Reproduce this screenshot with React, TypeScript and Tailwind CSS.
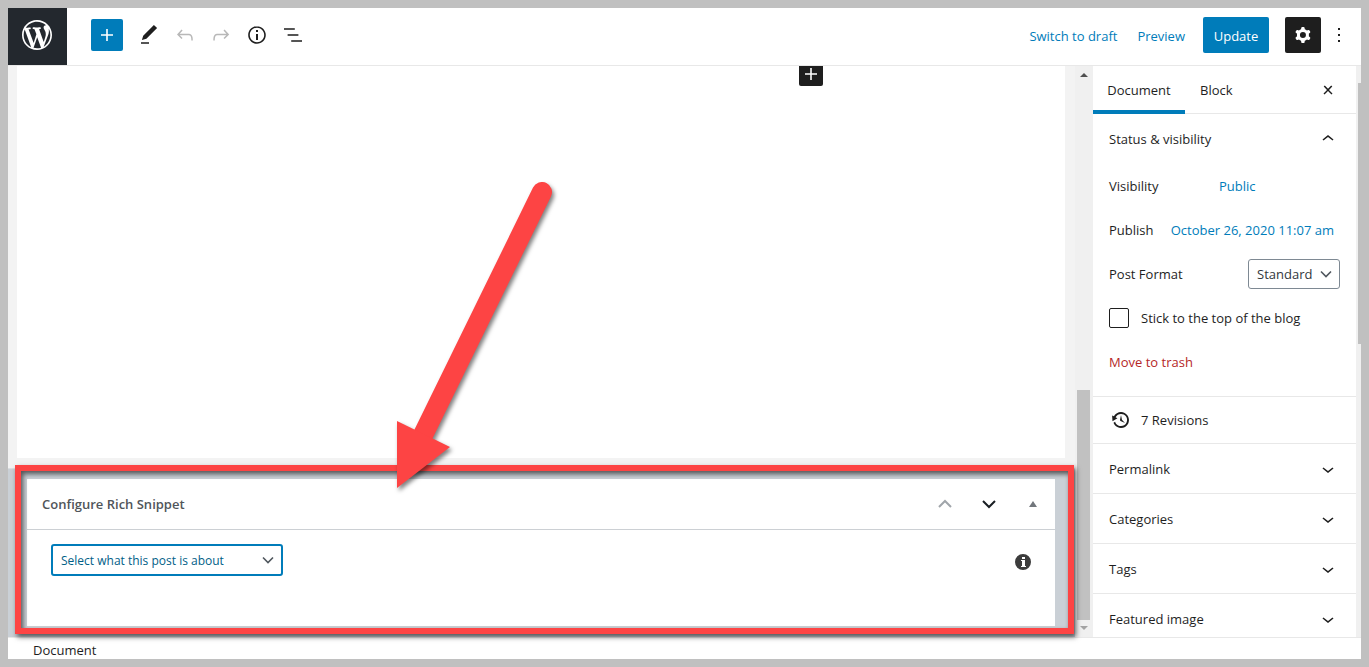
import type { ReactNode } from "react";
import clsx from "clsx";

const icons = {
  plus: "M18 11.2h-5.2V6h-1.6v5.2H6v1.6h5.2V18h1.6v-5.2H18z",
  edit: "M20.1 5.1L16.9 2 6.2 12.7l-1.3 4.4 4.5-1.3L20.1 5.1zM4 20.8h8v-1.5H4v1.5z",
  undo: "M18.3 11.7c-.6-.6-1.4-.9-2.3-.9H6.7l2.9-3.3-1.1-1-4.5 5L8.5 16l1-1-2.7-2.7H16c.5 0 .9.2 1.3.5 1 1 1 3.4 1 4.5v.3h1.5v-.2c0-1.5 0-4.3-1.5-5.7z",
  redo: "M15.6 6.5l-1.1 1 2.9 3.3H8c-.9 0-1.7.3-2.3.9-1.4 1.5-1.4 4.2-1.4 5.6v.2h1.5v-.3c0-1.1 0-3.5 1-4.5.3-.3.7-.5 1.3-.5h9.2L14.5 15l1.1 1.1 4.6-4.6-4.6-5z",
  info: "M12 3.2c-4.8 0-8.8 3.9-8.8 8.8 0 4.8 3.9 8.8 8.8 8.8 4.8 0 8.8-3.9 8.8-8.8 0-4.8-4-8.8-8.8-8.8zm0 16c-4 0-7.2-3.3-7.2-7.2C4.8 8 8 4.8 12 4.8s7.2 3.3 7.2 7.2c0 4-3.2 7.2-7.2 7.2zM11 17h2v-6h-2v6zm0-8h2V7h-2v2z",
  outline: "M13.8 5.2H3v1.5h10.8V5.2zm-3.6 12v1.5H21v-1.5H10.2zm7.2-6H6.6v1.5h10.8v-1.5z",
  cog: "M10.289 4.836A1 1 0 0111.275 4h1.306a1 1 0 01.987.836l.244 1.466c.787.26 1.503.679 2.108 1.218l1.393-.522a1 1 0 011.216.437l.653 1.13a1 1 0 01-.23 1.273l-1.148.944a6.025 6.025 0 010 2.435l1.149.946a1 1 0 01.23 1.272l-.653 1.13a1 1 0 01-1.216.437l-1.394-.522c-.605.54-1.32.958-2.108 1.218l-.244 1.466a1 1 0 01-.987.836h-1.306a1 1 0 01-.986-.836l-.244-1.466a5.995 5.995 0 01-2.108-1.218l-1.394.522a1 1 0 01-1.217-.436l-.653-1.131a1 1 0 01.23-1.272l1.149-.946a6.026 6.026 0 010-2.435l-1.148-.944a1 1 0 01-.23-1.272l.653-1.131a1 1 0 011.217-.437l1.393.522a5.994 5.994 0 012.108-1.218l.244-1.466zM14.929 12a3 3 0 11-6 0 3 3 0 016 0z",
  more: "M13 19h-2v-2h2v2zm0-6h-2v-2h2v2zm0-6h-2V5h2v2z",
  close: "M13 11.9l3.3-3.4-1.1-1-3.2 3.3-3.2-3.3-1.1 1 3.3 3.4-3.5 3.6 1 1L12 13l3.5 3.5 1-1z",
  chevronDown: "M17.5 11.6L12 16l-5.5-4.4.9-1.2L12 14l4.5-3.6 1 1.2z",
  chevronUp: "M6.5 12.4L12 8l5.5 4.4-.9 1.2L12 10l-4.5 3.6-1-1.2z",
};

function Icon({ name, className = "size-6" }: { name: keyof typeof icons; className?: string }) {
  return (
    <svg viewBox="0 0 24 24" fill="currentColor" fillRule="evenodd" aria-hidden="true" className={clsx("shrink-0", className)}>
      <path d={icons[name]} />
    </svg>
  );
}

function WordPressLogo() {
  return (
    <svg viewBox="-2 -2 24 24" fill="currentColor" aria-hidden="true" className="size-9">
      <path d="M20 10c0-5.51-4.49-10-10-10C4.48 0 0 4.49 0 10c0 5.52 4.48 10 10 10 5.51 0 10-4.48 10-10zM7.78 15.37L4.37 6.22c.55-.02 1.17-.08 1.17-.08.5-.06.44-1.13-.06-1.11 0 0-1.45.11-2.37.11-.18 0-.37 0-.58-.01C4.12 2.69 6.87 1.11 10 1.11c2.33 0 4.45.87 6.05 2.34-.68-.11-1.65.39-1.65 1.58 0 .74.45 1.36.9 2.1.35.61.55 1.36.55 2.46 0 1.49-1.4 5-1.4 5l-3.03-8.37c.54-.02.82-.17.82-.17.5-.05.44-1.25-.06-1.22 0 0-1.44.12-2.38.12-.87 0-2.33-.12-2.33-.12-.5-.03-.56 1.2-.06 1.22l.92.08 1.26 3.41zM17.41 10c.24-.64.74-1.87.43-4.25.7 1.29 1.05 2.71 1.05 4.25 0 3.29-1.73 6.24-4.4 7.78.97-2.59 1.94-5.2 2.92-7.78zM6.1 18.09C3.12 16.65 1.11 13.53 1.11 10c0-1.3.23-2.48.72-3.59C3.25 10.3 4.67 14.2 6.1 18.09zm4.03-6.63l2.58 6.98c-.86.29-1.76.45-2.71.45-.79 0-1.57-.11-2.29-.33.81-2.38 1.62-4.74 2.42-7.1z" />
    </svg>
  );
}

function SelectChevron({ className }: { className: string }) {
  return (
    <svg viewBox="0 0 12 12" fill="none" stroke="#50575e" strokeWidth="1.6" aria-hidden="true" className={clsx("pointer-events-none absolute size-3", className)}>
      <path d="M1 3.500l5 5 5-5" />
    </svg>
  );
}

const tools = [
  { name: "edit", label: "Tools", muted: false },
  { name: "undo", label: "Undo", muted: true },
  { name: "redo", label: "Redo", muted: true },
  { name: "info", label: "Content structure", muted: false },
  { name: "outline", label: "Block navigation", muted: false },
] as const;

function Header() {
  return (
    <header className="flex h-[58px] shrink-0 border-b border-[#e8e8e8] bg-white">
      <a href="#posts" aria-label="View posts" className="flex w-[59px] shrink-0 items-center justify-center bg-[#23282e] pr-px pb-[3px] text-white">
        <WordPressLogo />
      </a>
      <div className="flex flex-1 items-center pb-[3px] pl-6">
        <button type="button" aria-label="Add block" className="mr-2 flex size-8 items-center justify-center rounded-xs bg-[#007cba] text-white">
          <Icon name="plus" />
        </button>
        {tools.map((tool) => (
          <button
            key={tool.name}
            type="button"
            aria-label={tool.label}
            className={clsx("flex size-9 items-center justify-center", tool.muted ? "text-[#b8b8b8]" : "text-[#1e1e1e]")}
          >
            <Icon name={tool.name} />
          </button>
        ))}
      </div>
      <div className="flex items-center pb-[3px] text-[13px] leading-5 text-[#007cba]">
        <button type="button" className="mr-5 pt-0.5">Switch to draft</button>
        <a href="#preview" className="mr-[18px] pt-0.5">Preview</a>
        <button type="button" className="mr-4 h-9 w-[66px] rounded-xs bg-[#007cba] pt-0.5 text-white">Update</button>
        <button type="button" aria-label="Settings" className="flex size-9 items-center justify-center rounded-xs bg-[#1e1e1e] text-white">
          <Icon name="cog" />
        </button>
        <button type="button" aria-label="More options" className="flex w-10 items-center justify-center pr-1 text-[#1e1e1e]">
          <Icon name="more" />
        </button>
      </div>
    </header>
  );
}

function Callout() {
  return (
    <>
      <div className="pointer-events-none absolute -top-1 right-px bottom-[3px] left-[7px] z-10 border-6 border-[#fd4444] shadow-[2px_3px_5px_rgba(0,0,0,0.6),inset_2px_3px_5px_rgba(0,0,0,0.6)]" />
      <svg
        viewBox="380 170 180 330"
        aria-hidden="true"
        className="pointer-events-none absolute bottom-[137px] left-[372px] z-20 h-[330px] w-[180px] drop-shadow-[2px_3px_2px_rgba(0,0,0,0.5)]"
      >
        <path d="M542 192L423 435" stroke="#fd4444" strokeWidth="20" strokeLinecap="round" />
        <path d="M397 421l53 26-53 41z" fill="#fd4444" />
      </svg>
    </>
  );
}

function MetaBox() {
  return (
    <div className="relative h-[169px] shrink-0 border-t border-[#dcdfe2] bg-[#cad0d6] pt-[10px] pr-5 pb-[10px] pl-[19px]">
      <section className="h-full border-b border-[#ccd0d4] bg-white">
        <div className="flex h-[51px] items-center border-b border-[#ccd0d4] pl-[15px]">
          <h2 className="flex-1 text-[13px] leading-5 font-semibold text-[#50555a]">Configure Rich Snippet</h2>
          <button type="button" aria-label="Move up" className="flex w-11 justify-center text-[#a0a5aa]">
            <svg viewBox="0 0 14 10" fill="none" stroke="currentColor" strokeWidth="2" className="h-[10px] w-[14px]">
              <path d="M1 8l6-6 6 6" />
            </svg>
          </button>
          <button type="button" aria-label="Move down" className="flex w-11 justify-center text-[#191e23]">
            <svg viewBox="0 0 14 10" fill="none" stroke="currentColor" strokeWidth="2" className="h-[10px] w-[14px]">
              <path d="M1 2l6 6 6-6" />
            </svg>
          </button>
          <button type="button" aria-label="Toggle panel" className="flex w-11 justify-center text-[#72777c]">
            <svg viewBox="0 0 8 6" fill="currentColor" className="h-[6px] w-[8px]">
              <path d="M4 0l4 6H0z" />
            </svg>
          </button>
        </div>
        <div className="flex items-start justify-between pt-[14px] pr-6 pl-6">
          <div className="relative">
            <select
              aria-label="Snippet type"
              className="h-8 w-[232px] appearance-none rounded-[3px] border-2 border-[#007cba] bg-white pt-px pl-2 text-xs text-[#016087]"
            >
              <option>Select what this post is about</option>
            </select>
            <SelectChevron className="top-[10px] right-[9px]" />
          </div>
          <button type="button" aria-label="Help" className="mt-[10px]">
            <svg viewBox="0 0 16 16" fill="#3c3c3c" fillRule="evenodd" className="size-4">
              <path d="M8 0a8 8 0 1 0 0 16A8 8 0 0 0 8 0zM7 3h3v2H7zM6 6h4v6h1v1H6v-1h1V7H6z" />
            </svg>
          </button>
        </div>
      </section>
      <Callout />
    </div>
  );
}

function Editor() {
  return (
    <main className="flex min-w-0 flex-1 flex-col bg-[#f3f3f3]">
      <div className="mr-[10px] mb-[10px] ml-[9px] flex flex-1 justify-end bg-white pr-[242px]">
        <button type="button" aria-label="Add block" className="flex h-5 w-6 items-end justify-center overflow-hidden rounded-b-xs bg-[#1e1e1e] text-white">
          <Icon name="plus" />
        </button>
      </div>
      <MetaBox />
    </main>
  );
}

function EditorScrollbar() {
  return (
    <div className="flex w-[18px] shrink-0 flex-col items-center bg-[#f0f0f0] pt-[7px] pr-[3px] pl-[2px]">
      <svg viewBox="0 0 8 4" fill="#505050" className="h-1 w-2">
        <path d="M4 0l4 4H0z" />
      </svg>
      <div className="mt-auto h-[230px] w-full bg-[#c1c1c1]" />
      <svg viewBox="0 0 8 4" fill="#a3a3a3" className="mt-[6px] mb-[7px] h-1 w-2">
        <path d="M0 0h8L4 4z" />
      </svg>
    </div>
  );
}

function Row({ children, className }: { children: ReactNode; className?: string }) {
  return <div className={clsx("flex h-11 items-center", className)}>{children}</div>;
}

const panels = ["Permalink", "Categories", "Tags", "Featured image"];

function Sidebar() {
  return (
    <aside className="w-[263px] shrink-0 overflow-hidden bg-white text-[13px] leading-5 text-[#1e1e1e]">
      <div className="flex h-12 border-b border-[#e8e8e8] font-medium">
        <button type="button" className="h-12 w-[92px] border-b-4 border-[#007cba] pt-1">Document</button>
        <button type="button" className="px-[15px]">Block</button>
        <button type="button" aria-label="Close settings" className="mr-4 ml-auto">
          <Icon name="close" />
        </button>
      </div>

      <section className="border-b border-[#e8e8e8] pr-4 pb-3 pl-4">
        <button type="button" className="flex h-[50px] w-full items-center justify-between font-medium">
          Status &amp; visibility
          <Icon name="chevronUp" />
        </button>
        <Row>
          <span className="w-[110px]">Visibility</span>
          <button type="button" className="text-[#007cba]">Public</button>
        </Row>
        <Row className="justify-between pr-[6px]">
          <span>Publish</span>
          <button type="button" className="text-[#007cba]">October 26, 2020 11:07 am</button>
        </Row>
        <Row className="justify-between">
          <label htmlFor="post-format">Post Format</label>
          <div className="relative">
            <select id="post-format" className="h-[30px] w-[92px] appearance-none rounded-[3px] border border-[#7e8993] bg-white pl-2 text-[#32373c]">
              <option>Standard</option>
            </select>
            <SelectChevron className="top-[9px] right-2" />
          </div>
        </Row>
        <Row>
          <input id="sticky" type="checkbox" className="mr-3 size-5 appearance-none rounded-xs border border-[#1e1e1e] bg-white" />
          <label htmlFor="sticky">Stick to the top of the blog</label>
        </Row>
        <Row>
          <button type="button" className="text-[#b52727]">Move to trash</button>
        </Row>
      </section>

      <a href="#revisions" className="flex h-[47px] items-center border-b border-[#e8e8e8] pl-[18px] font-medium">
        <svg viewBox="0 0 20 20" fill="currentColor" aria-hidden="true" className="mr-[10px] size-5">
          <path d="M13.65 2.88c3.93 2.01 5.48 6.84 3.47 10.77s-6.83 5.48-10.77 3.47c-1.87-.96-3.2-2.56-3.86-4.4l1.64-1.03c.45 1.57 1.52 2.95 3.08 3.76 3.01 1.54 6.69.35 8.23-2.66 1.55-3.01.36-6.69-2.65-8.24C9.78 3.01 6.1 4.2 4.56 7.21l1.88.97-4.95 3.08-.39-5.82 1.78.91C4.9 2.4 9.75.89 13.65 2.88zm-4.36 7.83C9.11 10.53 9 10.28 9 10c0-.07.03-.12.04-.19h-.01L10 5l.97 4.81L14 13l-4.5-2.12.02-.02c-.08-.04-.16-.09-.23-.15z" />
        </svg>
        7 Revisions
      </a>

      {panels.map((title) => (
        <button
          key={title}
          type="button"
          className="flex h-[50px] w-full items-center justify-between border-b border-[#e8e8e8] pr-4 pl-4 font-medium"
        >
          {title}
          <Icon name="chevronDown" />
        </button>
      ))}
    </aside>
  );
}

export default function App() {
  return (
    <div className="flex h-screen flex-col border-8 border-[#c0c0c0] bg-white font-['Open_Sans','Noto_Sans',sans-serif]">
      <Header />
      <div className="flex min-h-0 flex-1">
        <Editor />
        <EditorScrollbar />
        <Sidebar />
        <div className="flex w-[5px] shrink-0 justify-end bg-[#f0f0f0] pt-[17px]">
          <div className="h-[261px] w-[3px] bg-[#c0c0c0]" />
        </div>
      </div>
      <footer className="h-[22px] shrink-0 border-t border-[#e8e8e8] pt-[3px] pl-[25px] text-[13px] leading-[18px] text-[#1e1e1e]">
        Document
      </footer>
    </div>
  );
}
